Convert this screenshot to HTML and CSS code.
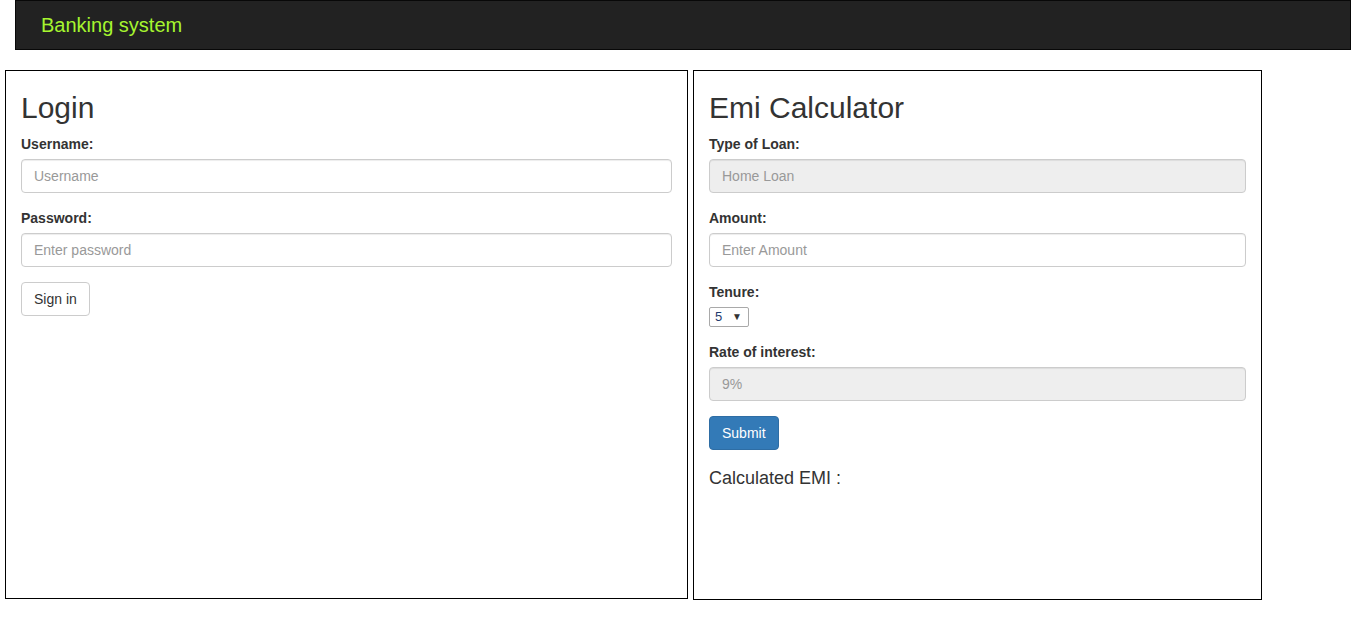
FILE: index.html
```html
<!DOCTYPE html>
<html>
<head>
<meta charset="utf-8">
<title>Banking system</title>
<link rel="stylesheet" href="styles.css">
</head>
<body>
<nav class="navbar">
  <span class="brand">Banking system</span>
</nav>
<main class="panels">
  <section class="panel panel-login">
    <h2 class="panel-title">Login</h2>
    <form class="form">
      <div class="form-group">
        <label class="label" for="user">Username:</label>
        <input class="input" id="user" type="text" placeholder="Username">
      </div>
      <div class="form-group">
        <label class="label" for="pwd">Password:</label>
        <input class="input" id="pwd" type="password" placeholder="Enter password">
      </div>
      <button type="button" class="btn btn-default">Sign in</button>
    </form>
  </section>
  <section class="panel panel-emi">
    <h2 class="panel-title">Emi Calculator</h2>
    <form class="form">
      <div class="form-group">
        <label class="label" for="type">Type of Loan:</label>
        <input class="input" id="type" type="text" placeholder="Home Loan" disabled>
      </div>
      <div class="form-group">
        <label class="label" for="amt">Amount:</label>
        <input class="input" id="amt" type="text" placeholder="Enter Amount">
      </div>
      <div class="form-group">
        <label class="label" for="ten">Tenure:</label>
        <span class="select-wrap">
          <select class="select" id="ten">
            <option>5</option>
            <option>10</option>
            <option>15</option>
            <option>20</option>
          </select>
        </span>
      </div>
      <div class="form-group">
        <label class="label" for="rate">Rate of interest:</label>
        <input class="input" id="rate" type="text" placeholder="9%" disabled>
      </div>
      <button type="button" class="btn btn-primary">Submit</button>
    </form>
    <h4 class="result">Calculated EMI :</h4>
  </section>
</main>
</body>
</html>
```
FILE: styles.css
```css
* { box-sizing: border-box; }
html, body {
  margin: 0;
  padding: 0;
  background: #fff;
  font-family: "Liberation Sans", Arial, Helvetica, sans-serif;
  font-size: 14px;
  line-height: 1.42857;
  color: #333;
}
.navbar {
  margin: 0 15px;
  height: 50px;
  background: #222;
  border: 1px solid #080808;
  display: flex;
  align-items: flex-start;
  padding: 14px 0 0 25px;
}
.brand {
  font-size: 20px;
  line-height: 20px;
  color: #a6f52f;
}
.panels {
  display: flex;
  align-items: flex-start;
  gap: 5px;
  margin-top: 20px;
  padding-left: 5px;
}
.panel {
  border: 1px solid #000;
  padding: 0 15px;
}
.panel-login { width: 683px; height: 529px; }
.panel-emi { width: 569px; height: 530px; }
.panel-title {
  margin: 20px 0 10px;
  font-size: 30px;
  font-weight: 500;
  line-height: 1.1;
}
.form { margin: 0; }
.form-group { margin-bottom: 15px; }
.label {
  display: block;
  font-weight: 700;
  margin-bottom: 5px;
  line-height: 20px;
}
.input {
  display: block;
  width: 100%;
  height: 34px;
  padding: 6px 12px;
  font: inherit;
  font-size: 14px;
  color: #555;
  background: #fff;
  border: 1px solid #ccc;
  border-radius: 4px;
  box-shadow: inset 0 1px 1px rgba(0,0,0,.075);
  outline: none;
}
.input::placeholder { color: #999; opacity: 1; }
.input:disabled { background: #eee; }
.select-wrap {
  position: relative;
  display: inline-block;
  width: 40px;
  height: 20px;
}
.select {
  appearance: none;
  -webkit-appearance: none;
  width: 40px;
  height: 20px;
  margin: 0;
  padding: 0 0 0 5px;
  font: inherit;
  font-size: 13px;
  line-height: 18px;
  color: #1f3b6e;
  background: #fff;
  border: 1px solid #a9a9a9;
  border-radius: 2px;
}
.select-wrap::after {
  content: "\25BC";
  position: absolute;
  right: 7px;
  top: 5px;
  font-size: 10px;
  line-height: 10px;
  color: #333;
  pointer-events: none;
}
.btn {
  display: inline-block;
  height: 34px;
  padding: 6px 12px;
  font: inherit;
  font-size: 14px;
  line-height: 20px;
  border: 1px solid #ccc;
  border-radius: 4px;
  background: #fff;
  color: #333;
  cursor: pointer;
}
.btn-primary {
  background: #337ab7;
  border-color: #2e6da4;
  color: #fff;
}
.result {
  margin: 19px 0 0;
  font-size: 18px;
  font-weight: 500;
  line-height: 1.1;
}
```
